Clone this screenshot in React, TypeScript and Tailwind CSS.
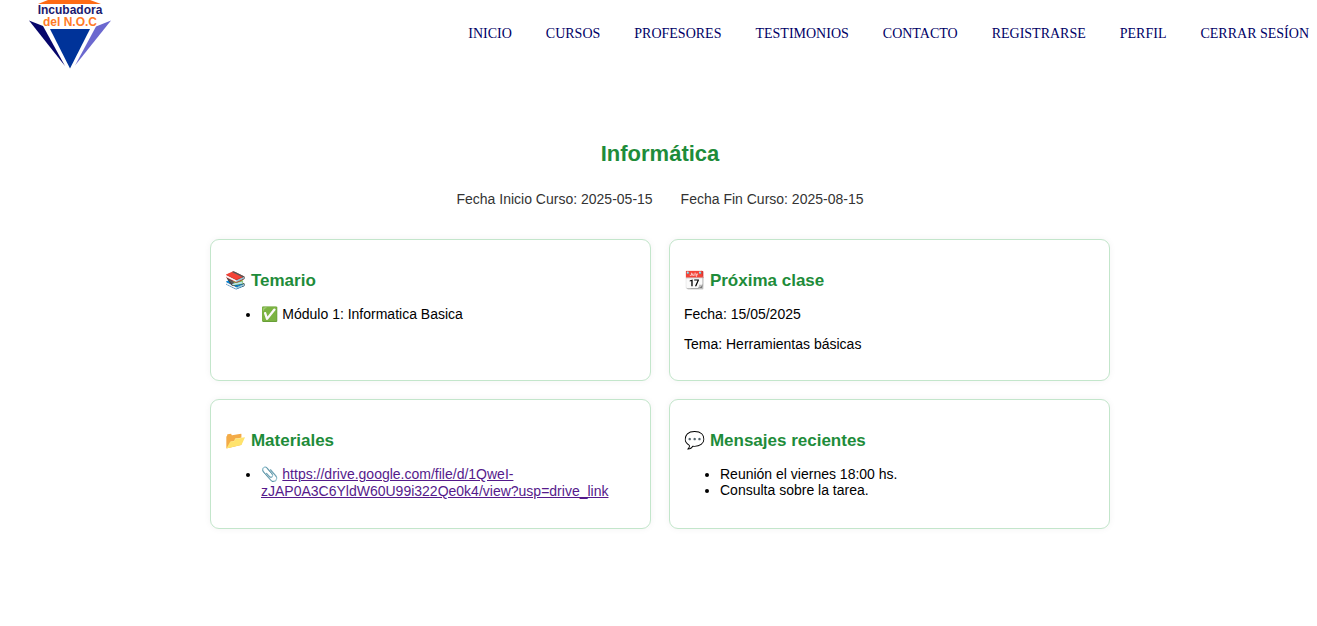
import type { ReactNode } from "react";

const links = [
  "INICIO",
  "CURSOS",
  "PROFESORES",
  "TESTIMONIOS",
  "CONTACTO",
  "REGISTRARSE",
  "PERFIL",
  "CERRAR SESÍON",
];

const driveUrl =
  "https://drive.google.com/file/d/1QweI-zJAP0A3C6YldW60U99i322Qe0k4/view?usp=drive_link";

function Logo() {
  return (
    <svg width="84" height="70" viewBox="0 0 84 70" role="img" aria-label="Incubadora del N.O.C" className="shrink-0">
      <path d="M20 0H62L73 4H10Z" fill="#ff6a13" />
      <polygon points="1,20.500 15,26 37,66" fill="#06066b" />
      <polygon points="83,20.500 68,26.500 47,65.500" fill="#6b68cf" />
      <polygon points="22,29 62,29 42,68.500" fill="#003399" />
      <text x="42" y="14" textAnchor="middle" fontFamily="Liberation Sans, sans-serif" fontWeight="bold" fontSize="12" fill="#1a1a6e">
        Incubadora
      </text>
      <text x="42" y="26" textAnchor="middle" fontFamily="Liberation Sans, sans-serif" fontWeight="bold" fontSize="12" fill="#ff7a26">
        del N.O.C
      </text>
    </svg>
  );
}

function Card({ icon, title, children }: { icon: string; title: string; children: ReactNode }) {
  return (
    <section className="rounded-[9px] border border-[#c3e6cb] bg-white px-3.5 pt-[31px] pb-7 shadow-[0_0_7px_rgba(0,0,0,0.05)]">
      <h3 className="mb-[15px] text-[17px] leading-5 font-bold text-[#1e8c3a]">
        {icon} {title}
      </h3>
      {children}
    </section>
  );
}

export default function App() {
  return (
    <div className="min-h-screen bg-white font-['Liberation_Sans','Noto_Color_Emoji',sans-serif] text-[14px] leading-4 text-black">
      <header className="flex items-start justify-between pr-2 pl-7">
        <Logo />
        <nav className="pt-[26px] font-['Liberation_Serif',serif]">
          <ul className="flex gap-[34px]">
            {links.map((label) => (
              <li key={label}>
                <a href="#" className="text-[#000066]">
                  {label}
                </a>
              </li>
            ))}
          </ul>
        </nav>
      </header>
      <main className="pt-[70px] pl-[3px]">
        <h2 className="text-center text-[22px] leading-7 font-bold text-[#1e8c3a]">Informática</h2>
        <div className="mt-[23px] flex justify-center gap-7 text-[#333333]">
          <p>Fecha Inicio Curso: 2025-05-15</p>
          <p>Fecha Fin Curso: 2025-08-15</p>
        </div>
        <div className="mx-auto mt-8 grid max-w-[900px] grid-cols-2 gap-[18px]">
          <Card icon="📚" title="Temario">
            <ul className="list-disc pl-9">
              <li>✅ Módulo 1: Informatica Basica</li>
            </ul>
          </Card>
          <Card icon="📆" title="Próxima clase">
            <p className="mb-3.5">Fecha: 15/05/2025</p>
            <p>Tema: Herramientas básicas</p>
          </Card>
          <Card icon="📂" title="Materiales">
            <ul className="list-disc pl-9 leading-[17px]">
              <li>
                📎{" "}
                <a href={driveUrl} className="text-[#551a8b] underline">
                  {driveUrl}
                </a>
              </li>
            </ul>
          </Card>
          <Card icon="💬" title="Mensajes recientes">
            <ul className="list-disc pl-9">
              <li>Reunión el viernes 18:00 hs.</li>
              <li>Consulta sobre la tarea.</li>
            </ul>
          </Card>
        </div>
      </main>
    </div>
  );
}
